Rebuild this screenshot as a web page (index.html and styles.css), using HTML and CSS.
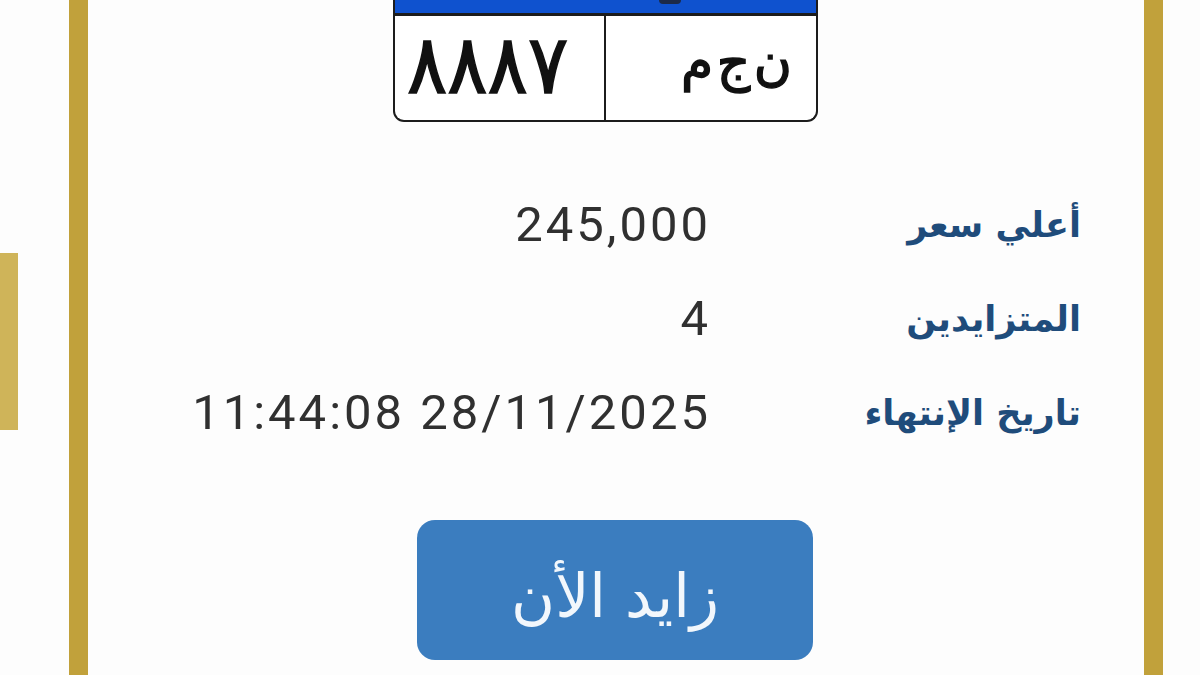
FILE: index.html
```html
<!DOCTYPE html>
<html lang="ar">
<head>
<meta charset="utf-8">
<title>مزاد اللوحات</title>
<link rel="stylesheet" href="styles.css">
</head>
<body>
<div class="page">
  <div class="peek"></div>
  <div class="card">
    <div class="plate">
      <div class="band"><span class="band-mark"></span></div>
      <div class="plate-body">
        <div class="cell cell-num"><span class="digits">٨٨٨٧</span></div>
        <div class="cell cell-let" dir="rtl">ن ج م</div>
      </div>
    </div>
    <div class="info" dir="rtl">
      <div class="label">أعلي سعر</div>
      <div class="value" dir="ltr">245,000</div>
      <div class="label">المتزايدين</div>
      <div class="value" dir="ltr">4</div>
      <div class="label">تاريخ الإنتهاء</div>
      <div class="value" dir="ltr">11:44:08 28/11/2025</div>
    </div>
    <button class="bid" dir="rtl">زايد الأن</button>
  </div>
</div>
</body>
</html>
```
FILE: styles.css
```css
html, body {
  margin: 0;
  padding: 0;
  background: #fdfdfd;
  overflow: hidden;
}
.page {
  width: 1200px;
  height: 675px;
  display: flex;
  align-items: flex-start;
}
.peek {
  width: 18px;
  height: 177px;
  margin-top: 253px;
  background: #cfb459;
  flex: none;
}
.card {
  margin-left: 51px;
  width: 1056px;
  height: 675px;
  border-left: 19px solid #c1a13b;
  border-right: 19px solid #c1a13b;
  display: flex;
  flex-direction: column;
  align-items: flex-start;
  flex: none;
}
.plate {
  margin-left: 305px;
  width: 421px;
  border: 2.5px solid #1c1c1c;
  border-top: none;
  border-radius: 0 0 11px 11px;
  background: #ffffff;
  overflow: hidden;
}
.band {
  height: 13px;
  background: #0f52cf;
  border-bottom: 3px solid #1c1c1c;
  display: flex;
  justify-content: flex-start;
}
.band-mark {
  display: block;
  margin-left: 264px;
  width: 22px;
  height: 4px;
  border-radius: 0 0 6px 6px;
  background: #1c2a48;
}
.plate-body {
  display: flex;
  height: 104px;
}
.cell {
  box-sizing: border-box;
  overflow: hidden;
  display: flex;
  align-items: center;
  font-family: "DejaVu Sans", sans-serif;
  color: #111;
  line-height: 1;
}
.cell-num {
  flex: none;
  width: 211px;
  border-right: 2.5px solid #1c1c1c;
  justify-content: flex-start;
  padding-left: 12px;
  padding-bottom: 6px;
  font-size: 82px;
  -webkit-text-stroke: 1.6px #111;
}
.digits {
  display: inline-block;
  white-space: nowrap;
  transform: scaleX(0.915);
  transform-origin: left center;
}
.cell-let {
  flex: 1;
  justify-content: flex-start;
  padding-right: 24px;
  padding-bottom: 12px;
  font-size: 52px;
  word-spacing: -13px;
  -webkit-text-stroke: 1.4px #111;
}
.info {
  margin-top: 56px;
  width: 1056px;
  box-sizing: border-box;
  padding-right: 63px;
  display: grid;
  grid-template-columns: 370px auto;
  grid-auto-rows: 94px;
}
.label {
  align-self: start;
  font-family: "DejaVu Sans", sans-serif;
  font-weight: bold;
  font-size: 35px;
  line-height: 94px;
  color: #1f4c7b;
  text-align: right;
}
.value {
  align-self: start;
  font-family: Roboto, "Liberation Sans", sans-serif;
  font-size: 49px;
  letter-spacing: 3px;
  line-height: 94px;
  color: #303030;
  grid-column: 2;
  justify-self: start;
  direction: ltr;
}
.bid {
  margin-top: 60px;
  margin-left: 329px;
  width: 396px;
  height: 140px;
  border: none;
  border-radius: 18px;
  background: #3b7dbf;
  color: #f2f7fc;
  font-family: "DejaVu Sans", sans-serif;
  font-size: 60px;
  padding: 12px 0 0 0;
}
```
